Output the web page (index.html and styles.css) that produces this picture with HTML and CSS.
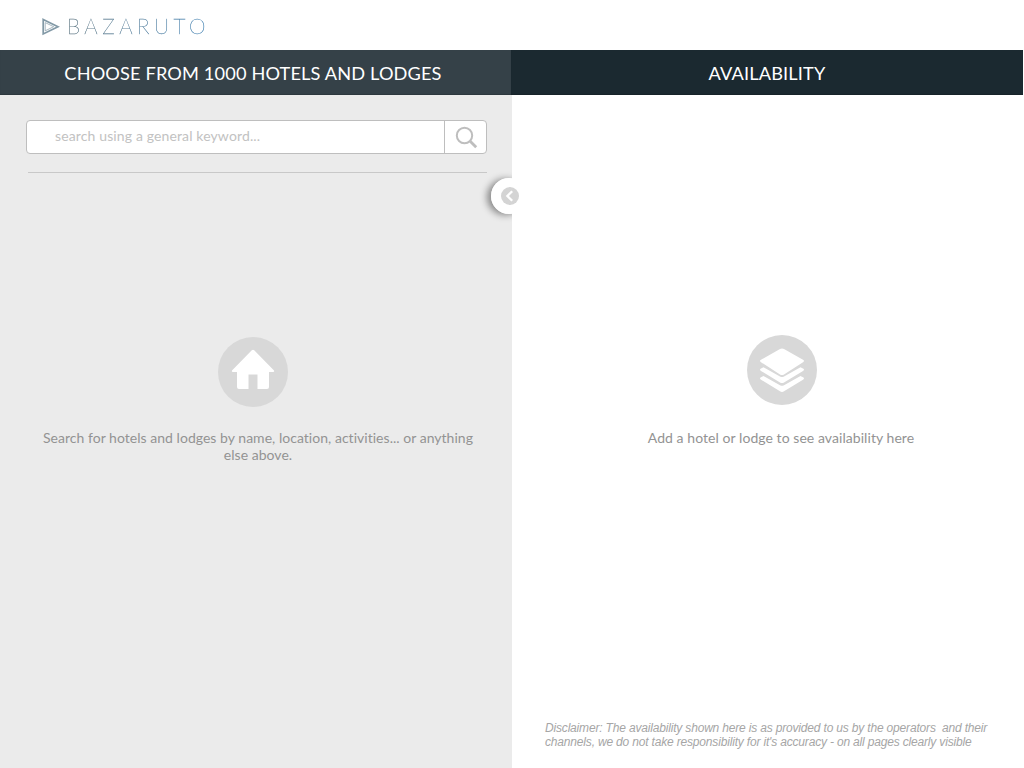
FILE: index.html
```html
<!DOCTYPE html>
<html lang="en">
<head>
<meta charset="utf-8">
<title>Bazaruto</title>
<link rel="stylesheet" href="styles.css">
</head>
<body>
<header class="brand">
  <svg class="brand-mark" width="18" height="18" viewBox="0 0 18 18" fill="none" stroke="#8299a6"><path d="M1.200 1.400 16 8.700 1.200 16Z" stroke-width="1.700"/><path d="M3.200 4.600 11.700 8.700 3.200 12.800Z" stroke-width=".7"/></svg>
  <span class="brand-name">BAZARUTO</span>
</header>
<nav class="titles">
  <h1 class="title title-search">CHOOSE FROM 1000 HOTELS AND LODGES</h1>
  <h1 class="title title-availability">AVAILABILITY</h1>
</nav>
<main class="panels">
  <section class="panel search-panel">
    <form class="search">
      <span class="search-field">search using a general keyword...</span>
      <span class="search-button"><svg width="24" height="24" viewBox="0 0 24 24" fill="none" stroke="#bebebe"><circle cx="9.500" cy="9.500" r="7.700" stroke-width="2"/><path d="m15.200 15.200 6 6" stroke-width="2.800"/></svg></span>
    </form>
    <hr class="rule">
    <div class="hint hint-search">
      <svg width="70" height="70" viewBox="0 0 70 70"><circle cx="35" cy="35" r="35" fill="#d8d8d8"/><path fill="#fff" d="M33.8 13.2q1.2-1 2.4 0L56 33.5q.7 1.5-1 1.5h-4v15q0 2-2 2h-9.500V37.500h-9V52H21q-2 0-2-2V35h-4q-1.700 0-1-1.500Z"/></svg>
      <p class="hint-text">Search for hotels and lodges by name, location, activities... or anything<br>else above.</p>
    </div>
    <span class="collapse"><svg width="18" height="18" viewBox="0 0 18 18"><circle cx="9" cy="9" r="9" fill="#d4d4d4"/><path d="M11.200 4.200 6.400 9l4.800 4.800" fill="none" stroke="#fff" stroke-width="2.300"/></svg></span>
  </section>
  <section class="panel availability-panel">
    <div class="hint hint-availability">
      <svg width="70" height="70" viewBox="0 0 70 70"><circle cx="35" cy="35" r="35" fill="#d8d8d8"/><g fill="#fff"><path d="M33 14q2-1.200 4 0l19 10.800q2 1.200 0 2.400L37 39.500q-2 1.200-4 0L14 27.200q-2-1.200 0-2.400Z"/><path id="layer" d="m14 33.500 2.500-1.300L33 41.500q2 1.100 4 0l16.500-9.300 2.500 1.300q2 1.200 0 2.400L37 47.500q-2 1.200-4 0L14 35.900q-2-1.200 0-2.400Z"/><use href="#layer" y="8.800"/></g></svg>
      <p class="hint-text">Add a hotel or lodge to see availability here</p>
    </div>
    <p class="disclaimer">Disclaimer: The availability shown here is as provided to us by the operators&nbsp; and their<br>channels, we do not take responsibility for it's accuracy - on all pages clearly visible</p>
  </section>
</main>
</body>
</html>
```
FILE: styles.css
```css
* { box-sizing: border-box; }
body {
  margin: 0;
  height: 768px;
  overflow: hidden;
  display: flex;
  flex-direction: column;
  background: #fff;
  font-family: Lato, "Open Sans", sans-serif;
  font-variant-ligatures: none;
}
p, h1, hr { margin: 0; }
svg { display: block; }
.brand {
  height: 50px;
  padding: 3px 0 0 42px;
  display: flex;
  align-items: center;
  gap: 7px;
}
.brand-name {
  margin-top: -2px;
  font-size: 21px;
  font-weight: 100;
  line-height: 26px;
  letter-spacing: 4.500px;
  color: transparent;
  -webkit-text-stroke: .3px transparent;
  background: linear-gradient(90deg, #5c7480, #4a88b8);
  background-clip: text;
  -webkit-background-clip: text;
}
.titles { display: flex; height: 45px; }
.title {
  font-size: 18.200px;
  font-weight: 400;
  line-height: 47px;
  letter-spacing: .140px;
  text-align: center;
  white-space: nowrap;
  color: #fff;
  box-shadow: inset 0 -1px 1px rgba(0, 0, 0, .15);
}
.title-search { width: 511px; padding-right: 5px; background: #354148; }
.title-availability { width: 512px; background: #1b2930; }
.panels { display: flex; flex: 1; }
.panel { position: relative; width: 512px; height: 673px; }
.search-panel { background: #ebebeb; padding: 25px 25px 0 26px; }
.search {
  display: flex;
  height: 34px;
  border: 1px solid #bebebe;
  border-radius: 4px;
  background: #fff;
}
.search-field {
  flex: 1;
  padding-left: 28px;
  font-size: 14px;
  line-height: 30px;
  letter-spacing: .130px;
  color: #c2c2c2;
}
.search-button {
  width: 42px;
  padding: 5px 0 0 10px;
  border-left: 1px solid #bebebe;
}
.rule { height: 1px; margin: 18px 0 0 2px; border: 0; background: #c8c8c8; }
.hint { display: flex; flex-direction: column; align-items: center; }
.hint-search { margin: 164px -16px 0; padding-right: 8px; }
.hint-availability { padding: 240px 0 0 28px; }
.hint-text {
  font-size: 14px;
  line-height: 17px;
  text-align: center;
  white-space: nowrap;
  color: #939393;
}
.hint-search .hint-text { margin: 22px 0 0 11px; letter-spacing: .030px; }
.hint-availability .hint-text { margin: 24px 2px 0 0; letter-spacing: .060px; }
.collapse {
  position: absolute;
  left: 491px;
  top: 83px;
  z-index: 1;
  width: 36px;
  height: 36px;
  padding: 9px 0 0 10px;
  border-radius: 50%;
  background: #fff;
}
.search-panel::after {
  content: "";
  position: absolute;
  left: 491px;
  top: 83px;
  width: 36px;
  height: 36px;
  border-radius: 50%;
  box-shadow: -4px 1px 7px rgba(0, 0, 0, .42);
  clip-path: inset(-12px 15px -12px -14px);
}
.disclaimer {
  position: absolute;
  left: 33px;
  bottom: 19px;
  font: italic 12px/14px "Liberation Sans", Arial, sans-serif;
  letter-spacing: -.175px;
  white-space: nowrap;
  color: #a6a6a6;
}
```
